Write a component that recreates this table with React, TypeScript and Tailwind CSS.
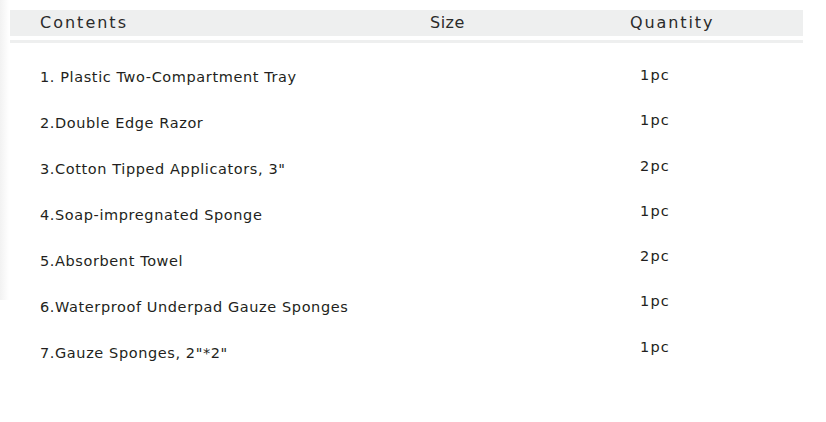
import React from "react";

const items = [
  "1. Plastic Two-Compartment Tray",
  "2.Double Edge Razor",
  "3.Cotton Tipped Applicators, 3\"",
  "4.Soap-impregnated Sponge",
  "5.Absorbent Towel",
  "6.Waterproof Underpad Gauze Sponges",
  "7.Gauze Sponges, 2\"*2\"",
];
const qty = ["1pc", "1pc", "2pc", "1pc", "2pc", "1pc", "1pc"];

export default function App() {
  return (
    <div
      className="relative w-[826px] h-[422px] bg-white text-[#231f20] overflow-hidden"
      style={{ fontFamily: "'Century Gothic', 'DejaVu Sans', sans-serif" }}
    >
      <div className="absolute left-0 top-0 w-[9px] h-[300px] bg-gradient-to-r from-[#f2f2f2] to-white" />
      <div className="pt-[10px] pl-[10px] w-[803px]">
        <div className="h-[26px] bg-[#eeefef] flex items-center text-[16px] text-[#2a2a2a]">
          <div className="pl-[30px] w-[420px] tracking-[2px]">Contents</div>
          <div className="w-[200px] tracking-[0.5px]">Size</div>
          <div className="tracking-[1.9px]">Quantity</div>
        </div>
        <div className="mt-[4px] h-[3px] bg-[#eeefef]" />
        <div className="flex">
          <div className="pl-[30px] w-[589px] pt-[25px] flex flex-col gap-[27px] text-[14.5px] leading-[19px] tracking-[0.6px]">
            {items.map((t) => (
              <div key={t}>{t}</div>
            ))}
          </div>
          <div className="pl-[41px] pt-[23px] flex flex-col gap-[26.3px] text-[14.5px] leading-[19px] tracking-[1.2px]">
            {qty.map((q, i) => (
              <div key={i}>{q}</div>
            ))}
          </div>
        </div>
      </div>
    </div>
  );
}
